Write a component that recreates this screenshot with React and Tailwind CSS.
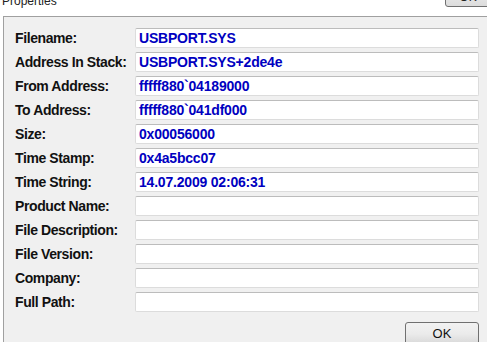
const rows = [
  { label: 'Filename:', value: 'USBPORT.SYS' },
  { label: 'Address In Stack:', value: 'USBPORT.SYS+2de4e' },
  { label: 'From Address:', value: 'fffff880`04189000' },
  { label: 'To Address:', value: 'fffff880`041df000' },
  { label: 'Size:', value: '0x00056000' },
  { label: 'Time Stamp:', value: '0x4a5bcc07' },
  { label: 'Time String:', value: '14.07.2009 02:06:31' },
  { label: 'Product Name:', value: '' },
  { label: 'File Description:', value: '' },
  { label: 'File Version:', value: '' },
  { label: 'Company:', value: '' },
  { label: 'Full Path:', value: '' },
];

export default function App() {
  return (
    <div className="w-[487px] h-[342px] overflow-hidden bg-white font-['Liberation_Sans',Arial,sans-serif]">
      {/* Title strip */}
      <div className="flex h-[16px] items-start justify-between">
        <span className="ml-[2px] -mt-[5px] text-[12px] leading-[12px] text-[#222]">Properties</span>
        <div className="-mt-[15px] mr-[-4px] h-[22px] w-[46px] rounded-[3px] border border-[#707070] bg-gradient-to-b from-[#f2f2f2] to-[#dcdcdc] flex items-end justify-center">
          <span className="text-[12px] leading-[12px] text-[#222] mb-[3px]">OK</span>
        </div>
      </div>

      {/* Panel */}
      <div className="ml-[3px] h-[326px] border-l border-t border-[#a0a0a0] bg-[#f0f0f0] pt-[11px] pl-[11px] pr-[8px]">
        <div className="grid grid-cols-[120px_1fr] gap-y-[4px] text-[14px] font-bold">
          {rows.map(({ label, value }) => (
            <div key={label} className="contents">
              <span className="leading-[20px] tracking-[-0.4px] text-[#111] whitespace-nowrap">{label}</span>
              <div className="h-[20px] rounded-[2px] border border-[#dcdcdc] border-t-[#bcbcbc] bg-white pl-[3px] leading-[18px] tracking-[-0.2px] text-[#0000c0] whitespace-nowrap overflow-hidden">
                {value}
              </div>
            </div>
          ))}
        </div>

        <div className="mt-[10px] flex justify-end">
          <button className="h-[24px] w-[74px] rounded-[3px] border border-[#707070] bg-gradient-to-b from-[#f2f2f2] via-[#ebebeb] to-[#d6d6d6] text-[13px] leading-[20px] text-[#111]">
            OK
          </button>
        </div>
      </div>
    </div>
  );
}
